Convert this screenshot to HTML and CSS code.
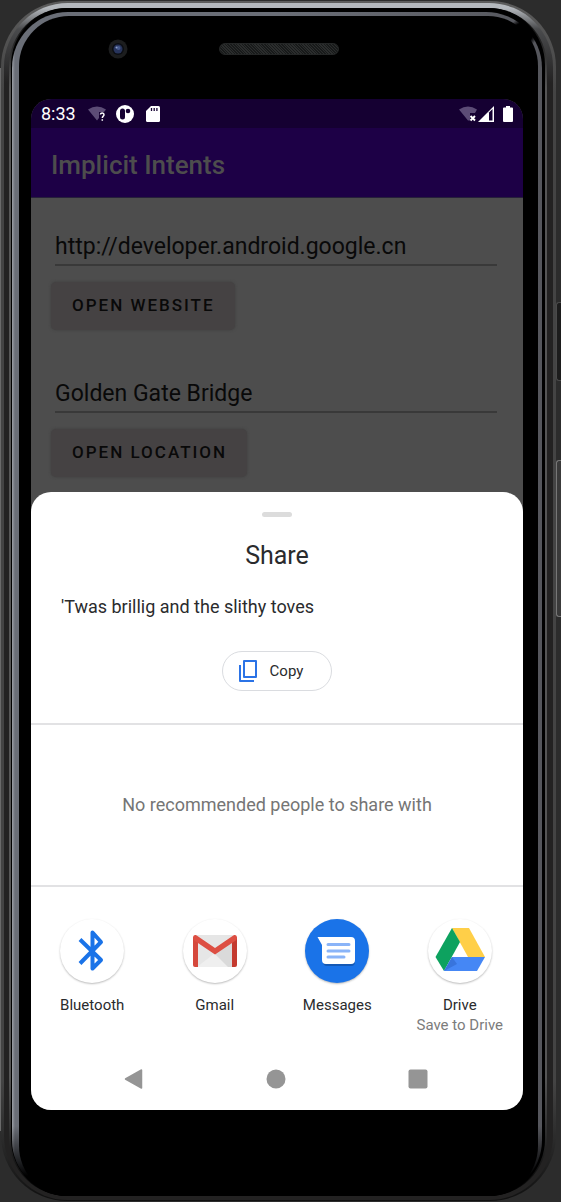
FILE: index.html
```html
<!DOCTYPE html>
<html lang="en">
<head>
<meta charset="utf-8">
<meta name="viewport" content="width=device-width, initial-scale=1">
<title>Implicit Intents</title>
<link rel="stylesheet" href="styles.css">
</head>
<body>
<div class="stage">
  <div class="rail-left"></div>
  <div class="shell"><div class="rim"><div class="seam"><div class="groove"><div class="bevel"><div class="face">
    <div class="forehead">
      <svg class="camera" viewBox="0 0 20 20" aria-hidden="true"><circle cx="10" cy="10" r="9.500" fill="#1c1d1e"/><circle cx="10" cy="10" r="6" fill="#0c0e14"/><circle cx="10" cy="10" r="4.500" fill="#27345c"/><circle cx="10.500" cy="9" r="2" fill="#45588c"/><circle cx="8.500" cy="8.500" r="1" fill="#8fa0cc"/></svg>
      <div class="speaker"></div>
    </div>
    <main class="screen">
      <div class="app">
        <div class="status">
          <time class="clock">8:33</time>
          <svg class="ic-wifi" viewBox="0 0 20 18" aria-hidden="true"><path d="M1 4.500Q10-1.500 19 4.500L17 7H12V13L10 15.500Z" fill="#5c4c76"/><path d="M13.500 9.500C13.500 7.500 17 7.500 17 9.700C17 11.200 15.300 11 15.300 13M15.300 14.200V15.700" fill="none" stroke="#fff" stroke-width="1.500"/></svg>
          <svg class="ic-app" viewBox="0 0 18 18" aria-hidden="true"><circle cx="9" cy="9" r="9" fill="#fff"/><rect x="4" y="3.500" width="5" height="11" rx="2.500" fill="#150032"/><circle cx="12" cy="6" r="2.300" fill="#150032"/></svg>
          <svg class="ic-sd" viewBox="0 0 14 16" aria-hidden="true"><path d="M5 0H12.500Q14 0 14 1.500V14.500Q14 16 12.500 16H1.500Q0 16 0 14.500V5Z" fill="#fff"/><path d="M5.500 2V5M8.200 2V5M10.900 2V5" stroke="#150032" stroke-width="1.300"/></svg>
          <span class="spring"></span>
          <svg class="ic-wifi" viewBox="0 0 20 18" aria-hidden="true"><path d="M1 4.500Q10-1.500 19 4.500L17 8H12V15.500H10Z" fill="#5c4c76"/><path d="M12.500 11L17 15.500M17 11L12.500 15.500" stroke="#fff" stroke-width="1.900"/></svg>
          <svg class="ic-signal" viewBox="0 0 16 16" aria-hidden="true"><path d="M0 16L16 0V16Z" fill="#fff"/><path d="M11 6.500L14.500 3V14.500H11Z" fill="#150032"/></svg>
          <svg class="ic-battery" viewBox="0 0 10 16" aria-hidden="true"><path d="M3 0H7V1.500H9Q10 1.500 10 2.500V15Q10 16 9 16H1Q0 16 0 15V2.500Q0 1.500 1 1.500H3Z" fill="#fff"/></svg>
        </div>
        <header class="appbar"><h1>Implicit Intents</h1></header>
        <form class="form">
          <input class="field" type="text" aria-label="Website" value="http://developer.android.google.cn">
          <button class="action" type="button">OPEN WEBSITE</button>
          <input class="field" type="text" aria-label="Location" value="Golden Gate Bridge">
          <button class="action" type="button">OPEN LOCATION</button>
        </form>
      </div>
      <section class="sheet" aria-labelledby="share-title">
        <div class="handle"></div>
        <h2 id="share-title">Share</h2>
        <p class="preview">'Twas brillig and the slithy toves</p>
        <button class="copy" type="button">
          <svg viewBox="0 0 20 24" aria-hidden="true"><path d="M6 2H18V18H6Z M2 6V22H16" fill="none" stroke="#2b73e6" stroke-width="2" stroke-linejoin="round"/></svg>
          Copy
        </button>
        <p class="people">No recommended people to share with</p>
        <div class="targets">
          <button class="target" type="button">
            <svg class="disc" viewBox="0 0 64 64" aria-hidden="true"><path d="M20 20.500L41 41L32.500 49.500V13.500L41 23L20 44.500" fill="none" stroke="#1a73e8" stroke-width="4" stroke-linejoin="round"/></svg>
            <span>Bluetooth</span>
          </button>
          <button class="target" type="button">
            <svg class="disc" viewBox="0 0 64 64" aria-hidden="true"><path d="M14 16H50V48H14Z" fill="#e6e6e6"/><path d="M14 48L32 34L50 48Z" fill="#efefef"/><path d="M32 35L50 22V48H45Z" fill="#dadada"/><path d="M10 18V46Q10 48 12 48H15V20Z" fill="#d5483c"/><path d="M54 18V46Q54 48 52 48H49V20Z" fill="#c43a2f"/><path d="M10 19Q10 15.500 13 16L32 29L51 16Q54 15.500 54 19Q54 21 52 22L32 35.500L12 22Q10 21 10 19Z" fill="#dd4f43"/></svg>
            <span>Gmail</span>
          </button>
          <button class="target" type="button">
            <svg class="disc disc-blue" viewBox="0 0 64 64" aria-hidden="true"><path d="M14 20L18 28V43Q18 47 22 47H46Q50 47 50 43V24Z" fill="#1459b5"/><path d="M12.500 18H46Q50 18 50 22V41Q50 45 46 45H21Q17 45 17 41V26Z" fill="#fff"/><path d="M23 25.500H44M23 32H44M23 38H39" stroke="#8ab4f8" stroke-width="3" stroke-linecap="round"/></svg>
            <span>Messages</span>
          </button>
          <button class="target" type="button">
            <svg class="disc" viewBox="0 0 64 64" aria-hidden="true"><path d="M24 9H41L57 38H40Z" fill="#ffcf48"/><path d="M24 9L32 23L16 52L7.500 38Z" fill="#0da25f"/><path d="M24 38H57L49 52H16Z" fill="#4587f5"/><path d="M24 38L29 45L16 52Z" fill="#3874dc"/></svg>
            <span>Drive</span>
            <span class="sub">Save to Drive</span>
          </button>
        </div>
        <nav class="nav">
          <button type="button" aria-label="Back"><svg viewBox="0 0 20 20"><path d="M17.500 1V19L1.500 10Z" fill="#959595" stroke="#959595" stroke-width="1.500" stroke-linejoin="round"/></svg></button>
          <button type="button" aria-label="Home"><svg viewBox="0 0 20 20"><circle cx="10" cy="10" r="9.500" fill="#959595"/></svg></button>
          <button type="button" aria-label="Recents"><svg viewBox="0 0 20 20"><rect x="0.500" y="0.500" width="19" height="19" rx="2" fill="#959595"/></svg></button>
        </nav>
      </section>
    </main>
  </div></div></div></div></div></div>
  <div class="rail-right"><div class="key power"></div><div class="key volume"></div></div>
</div>
</body>
</html>
```
FILE: styles.css
```css
* { box-sizing: border-box; }
body {
  margin: 0;
  background: #2c2c2c;
  font-family: Roboto, "Liberation Sans", sans-serif;
}
button, input { font: inherit; color: inherit; border: 0; background: none; padding: 0; margin: 0; }
h1, h2, p { margin: 0; font-weight: 400; }
svg { display: block; flex: none; }

/* Device body, one wrapper per ring of the frame */
.stage {
  display: grid;
  grid-template-columns: 1px 1fr 5px;
  min-height: 100vh;
  padding: 1px 0;
}
.rail-left { margin: 67px 0 70px; background: #6a6a6a; }
.rail-right { display: flex; flex-direction: column; padding-top: 301px; }
.key { border: 1px solid #4a4a4a; border-right: 0; border-radius: 3px 0 0 3px; background: #1c1c1c; }
.power { height: 79px; margin-bottom: 79px; }
.volume { height: 157px; border-color: #777; background: #3a3a3a; }
.shell {
  display: grid;
  padding: 2px 3px 1px;
  border-radius: 66px;
  background: linear-gradient(#5c5c5c, #444 90px, #444 90%, #101010);
}
.rim {
  display: grid;
  padding: 5px 6px 4px 5px;
  border-radius: 64px;
  background: linear-gradient(#b4b8bd, #b4b8bd 5px, #4a4b4d 26px, #232222 80px);
}
.seam { display: grid; padding: 0 2px; border-radius: 58px; background: linear-gradient(#000, #565656 80px, #565656 90%, #000); }
.groove { display: grid; padding: 4px 3px 0 1px; border-radius: 57px; background: #000; }
.bevel {
  display: grid;
  padding: 4px 4px 0 7px;
  border-radius: 56px;
  background:
    radial-gradient(circle at calc(100% - 19px) 21px, #000 10px, transparent 15px),
    linear-gradient(transparent calc(100% - 70px), #000 calc(100% - 20px)),
    linear-gradient(90deg, #9b9fa6, #6a6e77 3px, #6a6e77 50%, #55565c);
}
.face {
  display: flex;
  flex-direction: column;
  padding: 0 15px 84px 12px;
  border-radius: 50px;
  background: #000;
}
.forehead {
  display: grid;
  grid-template-columns: 1fr auto 1fr;
  align-items: center;
  height: 83px;
  padding: 0 0 18px 3px;
}
.camera { width: 20px; height: 20px; margin-left: 74px; }
.speaker {
  grid-column: 2;
  width: 120px;
  height: 12px;
  border: 1px solid #242626;
  border-radius: 6px;
  background: repeating-linear-gradient(45deg, #181a1a 0 1px, #2b2d2d 1px 2px);
}

/* Screen: the sheet shares one grid cell with the app */
.screen { display: grid; border-radius: 20px; background: #4d4d4d; overflow: hidden; }
.app, .sheet { grid-area: 1 / 1; min-width: 0; }
.sheet { margin-top: 393px; }
.status { display: flex; align-items: center; height: 29px; padding: 0 10px; background: #150032; }
.clock { margin-right: 11px; color: #fff; font-size: 18px; }
.ic-wifi { width: 20px; height: 18px; }
.ic-app { width: 18px; height: 18px; margin: 0 12px 0 9px; }
.ic-sd { width: 14px; height: 16px; }
.ic-signal { width: 16px; height: 16px; margin-right: 9px; }
.ic-battery { width: 10px; height: 16px; }
.spring { flex: 1; }
.appbar { display: flex; align-items: center; height: 70px; padding: 4px 20px 0; background: #1d0046; border-bottom: 1px solid #26203a; }
.appbar h1 { color: #4d4d4d; font-size: 26px; font-weight: 500; line-height: 32px; }
.form { display: flex; flex-direction: column; align-items: flex-start; padding: 31px 20px; color: #090909; }
.field {
  align-self: stretch;
  height: 37px;
  margin: 0 6px 16px 4px;
  border-bottom: 2px solid #393939;
  font-size: 23px;
}
.action {
  height: 48px;
  margin-bottom: 46px;
  padding: 0 20px 2px 21px;
  border-radius: 5px;
  background: #454243;
  box-shadow: 0 0 3px #3e3e3e;
  font-size: 17px;
  font-weight: 500;
  letter-spacing: 2px;
}

.sheet { display: flex; flex-direction: column; padding-top: 20px; border-radius: 20px 20px 0 0; background: #fff; color: #2a2b2d; }
.handle { align-self: center; width: 30px; height: 5px; border-radius: 3px; background: #dcdcdc; }
.sheet h2 { margin-top: 23px; font-size: 25px; line-height: 32px; text-align: center; }
.preview { margin: 23px 30px 32px; font-size: 18px; line-height: 24px; }
.copy {
  display: flex;
  align-items: center;
  align-self: center;
  gap: 12px;
  height: 40px;
  padding: 0 28px 0 15px;
  border: 1px solid #dadce0;
  border-radius: 20px;
  font-size: 15px;
}
.copy svg { width: 20px; height: 24px; }
.people {
  margin-top: 32px;
  padding: 68px 20px;
  border: solid #e2e2e4;
  border-width: 2px 0;
  color: #757575;
  font-size: 18px;
  line-height: 24px;
  text-align: center;
}
.targets { display: grid; grid-template-columns: repeat(4, 1fr); padding: 32px 2px 0 0; }
.target { display: flex; flex-direction: column; align-items: center; font-size: 15px; line-height: 20px; white-space: nowrap; }
.disc { width: 64px; height: 64px; margin-bottom: 12px; border-radius: 50%; background: #fff; box-shadow: 0 1px 2px #bbb; }
.disc-blue { background: #1a73e8; }
.sub { color: #7c7c7c; }
.nav { display: grid; grid-template-columns: repeat(3, 1fr); justify-items: center; padding: 34px 34px 21px 32px; }
.nav button, .nav svg { width: 20px; height: 20px; }
```
